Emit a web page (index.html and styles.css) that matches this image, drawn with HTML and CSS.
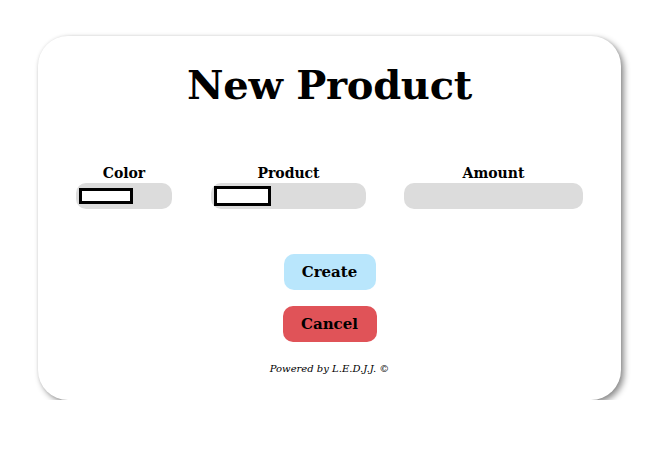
FILE: index.html
```html
<!DOCTYPE html>
<html>
<head>
<meta charset="utf-8">
<link rel="stylesheet" href="styles.css">
</head>
<body>
<div class="card">
  <h1 class="title">New Product</h1>
  <div class="fields">
    <div class="field field-color">
      <label class="label">Color</label>
      <div class="box"><span class="swatch swatch-sm"></span></div>
    </div>
    <div class="field field-product">
      <label class="label">Product</label>
      <div class="box"><span class="swatch swatch-lg"></span></div>
    </div>
    <div class="field field-amount">
      <label class="label">Amount</label>
      <div class="box"></div>
    </div>
  </div>
  <div class="actions">
    <button class="btn btn-create">Create</button>
    <button class="btn btn-cancel">Cancel</button>
  </div>
  <p class="footer">Powered by L.E.D.J.J. ©</p>
</div>
</body>
</html>
```
FILE: styles.css
```css
html, body {
  margin: 0;
  padding: 0;
  background: #ffffff;
}
body {
  font-family: "DejaVu Serif", "Liberation Serif", serif;
  color: #000;
  padding: 36px 0 0 38px;
}
.card {
  width: 583px;
  height: 364px;
  box-sizing: border-box;
  background: #fff;
  border-radius: 30px;
  box-shadow: 3px 3px 6px rgba(0,0,0,0.45), 0 0 3px rgba(0,0,0,0.08);
  padding: 27px 38px 0 38px;
  display: flex;
  flex-direction: column;
  align-items: center;
}
.title {
  margin: 0;
  font-size: 40px;
  font-weight: bold;
  line-height: 44px;
  letter-spacing: -0.3px;
}
.fields {
  align-self: stretch;
  display: flex;
  gap: 38px;
  margin-top: 58px;
}
.field {
  display: flex;
  flex-direction: column;
  align-items: center;
  flex: none;
}
.field-color { width: 96px; }
.field-product { width: 155px; margin-left: 1px; }
.field-amount { width: 179px; }
.label {
  font-size: 14px;
  font-weight: bold;
  line-height: 16px;
  margin-bottom: 2px;
}
.box {
  align-self: stretch;
  height: 26px;
  background: #dcdcdc;
  border-radius: 10px;
  display: flex;
  align-items: center;
  padding-left: 3px;
}
.swatch {
  box-sizing: border-box;
  border: 3px solid #000;
  background: #fff;
}
.swatch-sm { width: 54px; height: 16px; }
.swatch-lg { width: 57px; height: 20px; }
.actions {
  display: flex;
  flex-direction: column;
  align-items: center;
  gap: 16px;
  margin-top: 45px;
}
.btn {
  font-family: "DejaVu Serif", "Liberation Serif", serif;
  font-weight: bold;
  font-size: 15px;
  height: 36px;
  border: none;
  border-radius: 10px;
  color: #000;
  padding: 0;
}
.btn-create { width: 92px; background: #b9e6fc; }
.btn-cancel { width: 94px; background: #e05358; }
.footer {
  margin: 21px 0 0 0;
  font-size: 10px;
  font-style: italic;
}
```
